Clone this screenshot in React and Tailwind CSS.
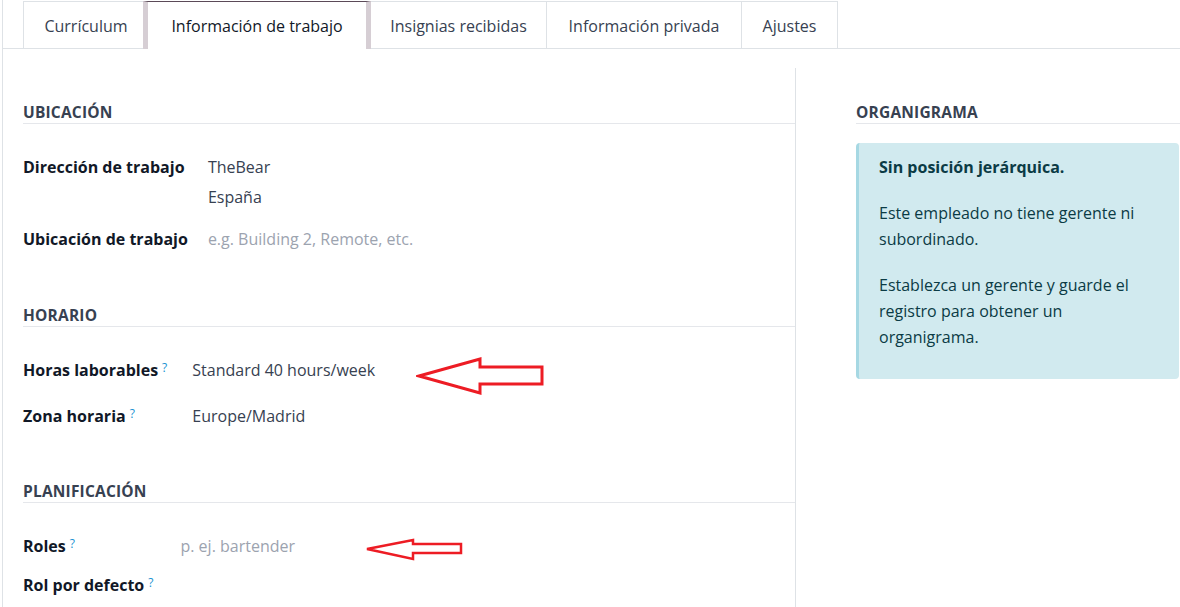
import React from "react";

const tabs = [
  { label: "Currículum", w: "w-[120px] pl-[5px]" },
  { label: "Información de trabajo", w: "w-[228px]", active: true },
  { label: "Insignias recibidas", w: "w-[176px]" },
  { label: "Información privada", w: "w-[195px]" },
  { label: "Ajustes", w: "w-[96px]" },
];

function Help() {
  return (
    <sup className="ml-[4px] text-[12px] font-medium text-[#1a93d2] relative -top-[4px]">?</sup>
  );
}

function SectionTitle({ children }) {
  return (
    <div className="text-[15.5px] leading-[20px] font-bold uppercase tracking-[0.2px] text-[#374151] border-b border-[#e5e7eb] pb-[1px]">
      {children}
    </div>
  );
}

function Arrow({ className, w, h, points, stroke }) {
  return (
    <svg className={className} width={w} height={h} viewBox={`0 0 ${w} ${h}`}>
      <polygon points={points} fill="none" stroke="#ed1c24" strokeWidth={stroke} strokeLinejoin="miter" />
    </svg>
  );
}

export default function App() {
  return (
    <div
      className="relative w-[1180px] h-[607px] overflow-hidden bg-white text-[16px] text-[#374151]"
      style={{ fontFamily: "'Open Sans', 'Noto Sans', sans-serif" }}
    >
      <div className="ml-[2px] h-full border-l border-[#dee2e6] flex flex-col">
        {/* ---------- TABS ---------- */}
        <div className="flex pl-[20px] border-b border-[#dee2e6] pt-[1px]">
          {tabs.map((t, i) =>
            t.active ? (
              <div
                key={t.label}
                className={`${t.w} h-[48px] -mb-[1px] pt-[1px] bg-white flex items-center justify-center border-t border-[#5b4a58] border-x-[5px] border-x-[#d6ced4] text-[#111827]`}
              >
                {t.label}
              </div>
            ) : (
              <div
                key={t.label}
                className={`${t.w} h-[47px] pt-[1px] flex items-center justify-center border-t border-[#dee2e6] ${
                  i === 0 ? "border-l" : ""
                } ${i > 1 ? "border-r" : ""}`}
              >
                {t.label}
              </div>
            )
          )}
        </div>

        {/* ---------- BODY ---------- */}
        <div className="flex flex-1 mt-[19px]">
          {/* left */}
          <div className="w-[793px] pl-[20px] border-r border-[#dee2e6] pt-[34px]">
            <SectionTitle>Ubicación</SectionTitle>
            <div className="grid grid-cols-[auto_1fr] gap-x-[20px] leading-[30px] mt-[28px]">
              <div className="font-bold text-[#111827]">Dirección de trabajo</div>
              <div>
                <div>TheBear</div>
                <div>España</div>
              </div>
              <div className="font-bold text-[#111827] mt-[12px]">Ubicación de trabajo</div>
              <div className="mt-[12px] text-[#9ca3af]">e.g. Building 2, Remote, etc.</div>
            </div>

            <div className="mt-[51px]">
              <SectionTitle>Horario</SectionTitle>
            </div>
            <div className="grid grid-cols-[auto_1fr] gap-x-[25px] leading-[30px] mt-[28px]">
              <div className="font-bold text-[#111827]">
                Horas laborables
                <Help />
              </div>
              <div>Standard 40 hours/week</div>
              <div className="font-bold text-[#111827] mt-[16px]">
                Zona horaria
                <Help />
              </div>
              <div className="mt-[16px]">Europe/Madrid</div>
            </div>

            <div className="mt-[50px]">
              <SectionTitle>Planificación</SectionTitle>
            </div>
            <div className="grid grid-cols-[auto_1fr] gap-x-[27px] leading-[30px] mt-[28px]">
              <div className="font-bold text-[#111827]">
                Roles
                <Help />
              </div>
              <div className="text-[#9ca3af]">p. ej. bartender</div>
              <div className="font-bold text-[#111827] mt-[9px]">
                Rol por defecto
                <Help />
              </div>
              <div className="mt-[9px]"></div>
            </div>
          </div>

          {/* right */}
          <div className="flex-1 pl-[60px] pt-[34px]">
            <SectionTitle>Organigrama</SectionTitle>
            <div className="mt-[19px] w-[323px] bg-[#d1eaef] border-l-[3px] border-[#a6d8e3] rounded-[4px] pl-[20px] pr-[20px] pt-[11px] pb-[29px] leading-[26px] text-[#0b3b45]">
              <div className="font-bold mb-[20px]">Sin posición jerárquica.</div>
              <p className="mb-[20px]">Este empleado no tiene gerente ni subordinado.</p>
              <p>Establezca un gerente y guarde el registro para obtener un organigrama.</p>
            </div>
          </div>
        </div>
      </div>

      {/* annotation arrows */}
      <Arrow
        className="absolute left-[416px] top-[356px]"
        w={130}
        h={40}
        stroke={3}
        points="3,20 64,3 64,11 126,11 126,28 64,28 64,37"
      />
      <Arrow
        className="absolute left-[365px] top-[538px]"
        w={99}
        h={24}
        stroke={2.5}
        points="2,11 48,2 48,6 96,6 96,15 48,15 48,21"
      />
    </div>
  );
}
